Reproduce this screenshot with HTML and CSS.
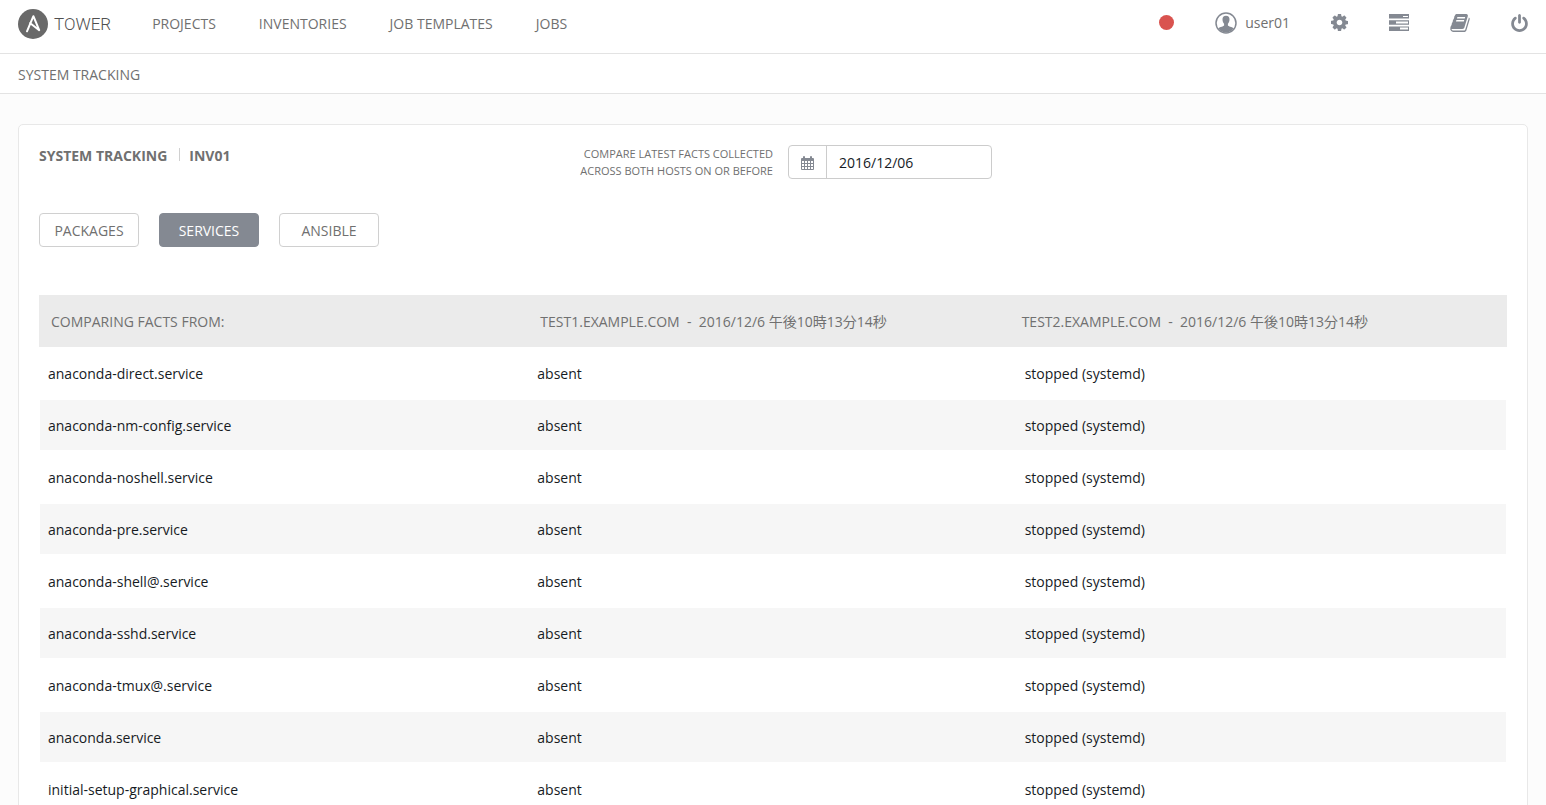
FILE: index.html
```
<!DOCTYPE html>
<html lang="en">
<head>
<meta charset="utf-8">
<title>System Tracking</title>
<link rel="stylesheet" href="styles.css">
</head>
<body>
<header class="topbar">
  <a class="brand" href="#">
    <svg class="brand-mark" viewBox="0 0 30 30" aria-hidden="true"><circle cx="15" cy="15" r="15" fill="#696969"/><path d="M9 22.300 15.400 7.200l5.800 14L12 14" fill="none" stroke="#fff" stroke-width="2" stroke-linejoin="round" stroke-linecap="round"/></svg>
    <span class="brand-name">TOWER</span>
  </a>
  <nav class="main-nav">
    <a href="#">PROJECTS</a>
    <a href="#">INVENTORIES</a>
    <a href="#">JOB TEMPLATES</a>
    <a href="#">JOBS</a>
  </nav>
  <div class="tools">
    <a class="status" href="#" aria-label="Status"></a>
    <a class="user" href="#">
      <svg class="avatar" viewBox="0 0 22 22" aria-hidden="true"><circle cx="11" cy="11" r="10" fill="none" stroke="#848992" stroke-width="1.500"/><path d="M11 3.800c-2.400 0-3.700 1.600-3.500 4 .1 1.600.7 3 1.600 4v1.800c-.5.9-3.900 1.300-5.700 2.700C5.300 19.500 8 20.600 11 20.600s5.700-1.100 7.600-4.300c-1.800-1.400-5.200-1.800-5.700-2.700v-1.800c.9-1 1.500-2.400 1.600-4 .2-2.400-1.100-4-3.500-4z" fill="#848992"/></svg>
      <span>user01</span>
    </a>
    <a class="tool" href="#" aria-label="Settings"><svg width="17" height="17" viewBox="128 128 1536 1536"><path d="M1152 896q0-106-75-181t-181-75-181 75-75 181 75 181 181 75 181-75 75-181zm512-109v222q0 12-8 23t-20 13l-185 28q-19 54-39 91 35 50 107 138 10 12 10 25t-9 23q-27 37-99 108t-94 71q-12 0-26-9l-138-108q-44 23-91 38-16 136-29 186-7 28-36 28h-222q-14 0-24.500-8.500t-11.500-21.500l-28-184q-49-16-90-37l-141 107q-10 9-25 9-14 0-25-11-126-114-165-168-7-10-7-23 0-12 8-23 15-21 51-66.500t54-70.500q-27-50-41-99l-183-27q-13-2-21-12.500t-8-23.500v-222q0-12 8-23t19-13l186-28q14-46 39-92-40-57-107-138-10-12-10-24 0-10 9-23 26-36 98.500-107.500t94.500-71.500q13 0 26 10l138 107q44-23 91-38 16-136 29-186 7-28 36-28h222q14 0 24.500 8.500t11.500 21.500l28 184q49 16 90 37l142-107q9-9 24-9 13 0 25 10 129 119 165 170 7 8 7 22 0 12-8 23-15 21-51 66.500t-54 70.500q26 50 41 98l183 28q13 2 21 12.500t8 23.500z"/></svg></a>
    <a class="tool" href="#" aria-label="Activity"><svg width="20" height="17" viewBox="0 0 20 17"><path fill-rule="evenodd" d="M0 0h20v4.500H0zM14 2v1h5v-1zM0 6.200h20v4.500H0zM7 7.500v2h12v-2zM0 12.500h20V17H0zM11 13.500v2h8v-2z"/></svg></a>
    <a class="tool" href="#" aria-label="Documentation"><svg width="20" height="18" viewBox="64 128 1664 1536"><path d="M1703 478q40 57 18 129l-275 906q-19 64-76.500 107.500t-122.500 43.500h-923q-77 0-148.500-53.500t-99.500-131.500q-24-67-2-127 0-4 3-27t4-37q1-8-3-21.500t-3-19.500q2-11 8-21t16.500-23.500 16.500-23.500q23-38 45-91.500t30-91.500q3-10 .5-30t-.5-28q3-11 17-28t17-23q21-36 42-92t25-90q1-9-2.500-32t.5-28q4-13 22-30.500t22-22.500q19-26 42.500-84.500t27.500-96.500q1-8-3-25.500t-2-26.500q2-8 9-18t18-23 17-21q8-12 16.500-30.500t15-35 16-36 19.500-32 26.500-23.500 36-11.500 47.500 5.500l-1 3q38-9 51-9h761q74 0 114 56t18 130l-274 906q-36 119-71.500 153.500t-128.500 34.500h-869q-27 0-38 15-11 16-1 43 24 70 144 70h923q29 0 56-15.500t35-41.500l300-987q7-22 5-57 38 15 59 43zm-1064 2q-4 13 2 22.500t20 9.500h608q13 0 25.500-9.500t16.500-22.500l21-64q4-13-2-22.500t-20-9.500h-608q-13 0-25.500 9.500t-16.500 22.500zm-83 256q-4 13 2 22.500t20 9.500h608q13 0 25.500-9.500t16.500-22.500l21-64q4-13-2-22.500t-20-9.500h-608q-13 0-25.500 9.500t-16.500 22.500z"/></svg></a>
    <a class="tool" href="#" aria-label="Log out"><svg width="17" height="18" viewBox="128 0 1536 1664"><path d="M1664 896q0 156-61 298t-164 245-245 164-298 61-298-61-245-164-164-245-61-298q0-182 80.500-343t226.500-270q43-32 95.500-25t83.500 50q32 42 24.500 94.500t-49.500 84.500q-98 74-151.500 181t-53.500 228q0 104 40.500 198.500t109.500 163.500 163.500 109.500 198.500 40.500 198.500-40.500 163.500-109.500 109.500-163.500 40.500-198.500q0-121-53.500-228t-151.500-181q-42-32-49.500-84.500t24.500-94.500q31-43 84-50t95 25q146 109 226.500 270t80.500 343zm-640-768v640q0 52-38 90t-90 38-90-38-38-90v-640q0-52 38-90t90-38 90 38 38 90z"/></svg></a>
  </div>
</header>
<div class="crumbs">SYSTEM TRACKING</div>
<main class="panel">
  <div class="panel-head">
    <div class="head-left">
      <h1 class="title"><span>SYSTEM TRACKING</span><span class="title-item">INV01</span></h1>
      <label class="date-label" for="date">COMPARE LATEST FACTS COLLECTED<br>ACROSS BOTH HOSTS ON OR BEFORE</label>
    </div>
    <div class="date-field">
      <button class="date-button" type="button" aria-label="Pick a date"><svg width="13" height="14" viewBox="0 0 13 14"><path fill-rule="evenodd" d="M1 2h1V1q0-1 1-1t1 1v1h5V1q0-1 1-1t1 1v1h1q1 0 1 1v10q0 1-1 1H1q-1 0-1-1V3q0-1 1-1zM1 5v2h2V5zm3 0v2h2V5zm3 0v2h2V5zm3 0v2h2V5zM1 8v2h2V8zm3 0v2h2V8zm3 0v2h2V8zm3 0v2h2V8zM1 11v2h2v-2zm3 0v2h2v-2zm3 0v2h2v-2zm3 0v2h2v-2z"/></svg></button>
      <input class="date-input" id="date" type="text" value="2016/12/06">
    </div>
  </div>
  <div class="modules">
    <button class="module" type="button">PACKAGES</button>
    <button class="module active" type="button">SERVICES</button>
    <button class="module" type="button">ANSIBLE</button>
  </div>
  <table class="facts">
    <thead><tr><th>COMPARING FACTS FROM:</th><th>TEST1.EXAMPLE.COM &nbsp;-&nbsp; 2016/12/6 午後10時13分14秒</th><th>TEST2.EXAMPLE.COM &nbsp;-&nbsp; 2016/12/6 午後10時13分14秒</th></tr></thead>
    <tbody>
      <tr><td>anaconda-direct.service</td><td>absent</td><td>stopped (systemd)</td></tr>
      <tr><td>anaconda-nm-config.service</td><td>absent</td><td>stopped (systemd)</td></tr>
      <tr><td>anaconda-noshell.service</td><td>absent</td><td>stopped (systemd)</td></tr>
      <tr><td>anaconda-pre.service</td><td>absent</td><td>stopped (systemd)</td></tr>
      <tr><td>anaconda-shell@.service</td><td>absent</td><td>stopped (systemd)</td></tr>
      <tr><td>anaconda-sshd.service</td><td>absent</td><td>stopped (systemd)</td></tr>
      <tr><td>anaconda-tmux@.service</td><td>absent</td><td>stopped (systemd)</td></tr>
      <tr><td>anaconda.service</td><td>absent</td><td>stopped (systemd)</td></tr>
      <tr><td>initial-setup-graphical.service</td><td>absent</td><td>stopped (systemd)</td></tr>
    </tbody>
  </table>
</main>
</body>
</html>
```
FILE: styles.css
```
* { box-sizing: border-box; }
body {
  margin: 0;
  background: #fcfcfc;
  color: #707070;
  font: 14px/20px "Open Sans", "Noto Sans CJK JP", sans-serif;
}
a { color: inherit; text-decoration: none; }
button, input { font: inherit; }
.topbar {
  display: flex;
  align-items: center;
  gap: 41px;
  height: 54px;
  padding: 0 18px 6px;
  background: #fff;
  border-bottom: 1px solid #e3e3e3;
}
.brand { display: flex; align-items: center; gap: 6px; }
.brand-mark { width: 30px; height: 30px; }
.brand-name { font: 300 17px/30px Roboto, sans-serif; color: #505050; }
.main-nav { display: flex; gap: 43px; }
.tools { display: flex; align-items: center; gap: 41px; margin-left: auto; padding-bottom: 2px; }
.status { width: 15px; height: 15px; border-radius: 50%; background: #d9534f; }
.user { display: flex; align-items: center; gap: 8px; }
.avatar { width: 22px; height: 22px; }
.tool { display: flex; fill: #848992; }
.crumbs {
  height: 40px;
  padding: 11px 18px 0;
  background: #fff;
  border-bottom: 1px solid #e3e3e3;
}
.panel {
  margin: 30px 18px 20px;
  padding: 20px;
  background: #fff;
  border: 1px solid #e8e8e8;
  border-radius: 5px;
}
.panel-head { display: grid; grid-template-columns: 1fr 1fr; }
.head-left { display: flex; justify-content: space-between; }
.title { display: flex; align-items: center; height: 22px; margin: 0; font-size: 14px; }
.title-item::before {
  content: "";
  display: inline-block;
  height: 13px;
  margin: 0 9px 0 12px;
  border-left: 1px solid #d0d0d0;
}
.date-label { font-size: 11px; line-height: 17px; text-align: right; }
.date-field {
  display: flex;
  width: 204px;
  height: 34px;
  margin-left: 15px;
  border: 1px solid #ccc;
  border-radius: 4px;
  background: #fff;
}
.date-button {
  display: flex;
  align-items: center;
  justify-content: center;
  width: 38px;
  padding: 2px 0 0;
  border: 0;
  border-right: 1px solid #ccc;
  background: none;
  fill: #848992;
}
.date-input { flex: 1; min-width: 0; padding: 2px 12px 0; border: 0; background: none; color: #161b1f; }
.modules { display: flex; gap: 20px; margin-top: 34px; }
.module {
  width: 100px;
  height: 34px;
  padding: 2px 0 0;
  border: 1px solid #d0d0d0;
  border-radius: 4px;
  background: #fff;
  color: #707070;
}
.module.active { border-color: #848992; background: #848992; color: #fff; }
.facts {
  width: 100%;
  margin-top: 48px;
  table-layout: fixed;
  border-spacing: 0;
}
.facts th {
  height: 52px;
  padding: 2px 12px 0;
  background: #ebebeb;
  font-weight: 400;
  text-align: left;
}
.facts th:last-child { padding-left: 4px; }
.facts td {
  height: 52px;
  padding: 2px 9px 0;
  border-top: 1px solid #fff;
  border-bottom: 1px solid #fff;
  color: #161b1f;
}
.facts td:first-child { padding-left: 8px; border-left: 1px solid #fff; }
.facts td:last-child { padding-left: 7px; border-right: 1px solid #fff; }
.facts tbody tr:nth-child(even) { background: #f6f6f6; }
```
